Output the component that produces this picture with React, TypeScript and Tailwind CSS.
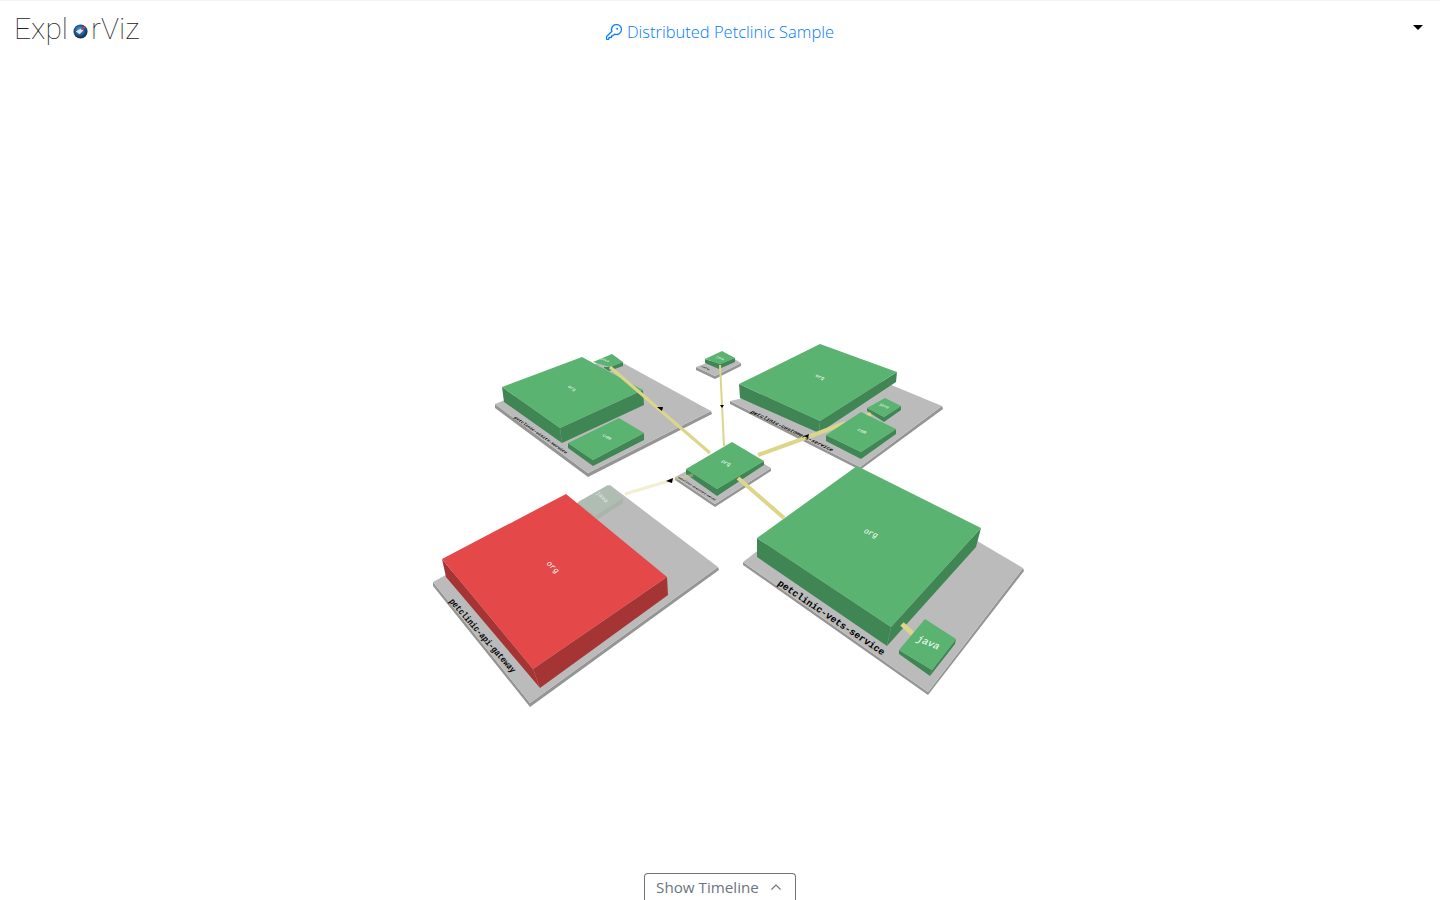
import React from 'react';
import { GoKey, GoChevronUp } from 'react-icons/go';

const GREEN = '#5ab370';
const GREEN_SIDE = '#408655';
const RED = '#e54848';
const RED_SIDE = '#a53535';
const GRAY = '#bbbbbb';
const GRAY_SIDE = '#959595';
const LINE = '#dcd68a';

type Pt = [number, number];

// flat slab drawn as one top face plus the two visible side faces
const Slab = ({ t, l, r, top, side, opacity }: { t: string; l: string; r: string; top: string; side: string; opacity?: number }) => (
  <g opacity={opacity}>
    <polygon points={l} fill={side} />
    <polygon points={r} fill={side} />
    <polygon points={t} fill={top} />
  </g>
);

const Label = ({ at, dir, up, size, text, color = '#ffffff', bold = false, opacity }: { at: Pt; dir: Pt; up: Pt; size: number; text: string; color?: string; bold?: boolean; opacity?: number }) => (
  <text
    transform={`matrix(${dir[0]} ${dir[1]} ${-up[0]} ${-up[1]} ${at[0]} ${at[1]})`}
    textAnchor="middle"
    dominantBaseline="central"
    fontSize={size}
    fontWeight={bold ? 700 : 400}
    fill={color}
    opacity={opacity}
    className="font-['Liberation_Mono',monospace]"
  >
    {text}
  </text>
);

const Pipe = ({ d, w = 4, color = LINE, opacity }: { d: string; w?: number; color?: string; opacity?: number }) => (
  <polyline points={d} fill="none" stroke={color} strokeWidth={w} opacity={opacity} />
);

const Landscape = () => (
  <svg width={1440} height={813} viewBox="0 60 1440 813" className="block">
    {/* foundations */}
    <Slab t="433,582 610,485 718,567 530,703" l="433,582 530,703 530,707 433,586" r="530,703 718,567 719,570 530,707" top={GRAY} side={GRAY_SIDE} />
    <Slab t="743,562 860,472 1023,568 928,692" l="743,562 928,692 928,695 743,565" r="928,692 1023,568 1024,571 928,695" top={GRAY} side={GRAY_SIDE} />
    <Slab t="495,404 612,357 711,411 588,473" l="495,404 588,473 588,477 495,408" r="588,473 711,411 712,414 588,477" top={GRAY} side={GRAY_SIDE} />
    <Slab t="730,401 860,372 942,406 860,467" l="730,401 860,467 860,470 730,404" r="860,467 942,406 943,409 860,470" top={GRAY} side={GRAY_SIDE} />
    <Slab t="696,367 728,355 741,363 715,376" l="696,367 715,376 715,379 696,370" r="715,376 741,363 741,366 715,379" top={GRAY} side={GRAY_SIDE} />
    <Slab t="675,477 735,446 771,468 715,504" l="675,477 715,504 715,507 675,480" r="715,504 771,468 771,471 715,507" top={GRAY} side={GRAY_SIDE} />

    {/* faded package behind the red one */}
    <Slab t="578,502 608,485 623,498 595,516" l="578,502 595,516 595,521 578,507" r="595,516 623,498 623,503 595,521" top="#b0bdb3" side="#a9b5ab" />

    {/* visits service */}
    <Slab t="619,418 644,433 593,460 568,443" l="568,443 593,460 593,466 568,448" r="593,460 644,433 644,440 593,466" top={GREEN} side={GREEN_SIDE} />
    <Slab t="593,362 612,354 623,362 610,367" l="604,367 610,367 609,371 604,368" r="610,367 623,362 623,366 609,371" top={GREEN} side={GREEN_SIDE} />
    <Slab t="582,357 643,390 560,428 502,387" l="502,387 560,428 562,443 504,402" r="560,428 643,390 644,405 562,443" top={GREEN} side={GREEN_SIDE} />

    {/* customers service */}
    <Slab t="885,398 901,406 884,417 867,408" l="867,408 884,417 884,422 867,411" r="884,417 901,406 901,410 884,422" top={GREEN} side={GREEN_SIDE} />
    <Slab t="820,344 897,372 820,421 739,384" l="739,384 820,421 819,433 740,398" r="820,421 897,372 896,382 819,433" top={GREEN} side={GREEN_SIDE} />

    {/* small service up top */}
    <Slab t="722,351 735,358 720,364 705,359" l="705,359 720,364 719,369 705,363" r="720,364 735,358 735,362 719,369" top={GREEN} side={GREEN_SIDE} />

    {/* communication lines */}
    <Pipe d="758,455 808,437 845,423" />
    <Pipe d="866,416 871,414" />
    <Pipe d="720,365 724,446" w={2} />
    <Pipe d="610,367 710,453" w={3} />

    <Slab t="861,412 896,429 861,452 826,435" l="826,435 861,452 861,459 826,441" r="861,452 896,429 896,434 861,459" top={GREEN} side={GREEN_SIDE} />

    {/* center service */}
    <Slab t="732,442 764,461 717,489 686,469" l="686,469 717,489 717,496 686,474" r="717,489 764,461 764,465 717,496" top={GREEN} side={GREEN_SIDE} />
    <Pipe d="738,478 784,518" />
    <Pipe d="625,494 672,480 693,475" w={3} opacity={0.4} />

    {/* vets service */}
    <Slab t="757,538 857,466 981,528 891,627" l="757,538 891,627 887,646 757,557" r="891,627 981,528 976,547 887,646" top={GREEN} side={GREEN_SIDE} />
    <Pipe d="902,624 914,635" w={5} />
    <Slab t="925,619 956,639 932,670 899,650" l="899,650 932,670 930,676 899,654" r="932,670 956,639 955,644 930,676" top={GREEN} side={GREEN_SIDE} />

    {/* api gateway */}
    <Slab t="442,559 566,494 667,577 533,669" l="442,559 533,669 540,688 446,577" r="533,669 667,577 668,595 540,688" top={RED} side={RED_SIDE} />

    {/* arrow heads */}
    <polygon points="657,407 663,407 662,411" fill="#000000" />
    <polygon points="666,481 673,478 672,483" fill="#000000" />
    <polygon points="804,436 809,434 808,438" fill="#000000" />
    <polygon points="720,405 724,405 722,408" fill="#000000" />

    {/* foundation names */}
    <Label at={[482, 636]} dir={[0.66, 0.75]} up={[0.97, -0.7]} size={7.6} text="petclinic-api-gateway" color="#000000" bold />
    <Label at={[831, 618]} dir={[0.83, 0.56]} up={[0.61, -0.79]} size={9.6} text="petclinic-vets-service" color="#000000" bold />
    <Label at={[792, 431]} dir={[0.9, 0.43]} up={[0.8, -0.6]} size={5.6} text="petclinic-customers-service" color="#000000" bold />
    <Label at={[541, 435]} dir={[0.82, 0.57]} up={[0.89, -0.45]} size={4.4} text="petclinic-visits-service" color="#000000" bold />
    <Label at={[697, 489]} dir={[0.85, 0.53]} up={[0.8, -0.6]} size={2.8} text="petclinic-discovery-server" color="#000000" bold />
    <Label at={[705, 368]} dir={[0.92, 0.38]} up={[0.8, -0.6]} size={2.4} text="config" color="#000000" bold />

    {/* package names */}
    <Label at={[871, 533]} dir={[0.9, 0.4]} up={[0.6, -0.8]} size={8} text="org" />
    <Label at={[928, 643]} dir={[0.92, 0.38]} up={[0.6, -0.8]} size={10} text="java" />
    <Label at={[553, 567]} dir={[0.7, 0.7]} up={[0.8, -0.6]} size={8} text="org" />
    <Label at={[602, 497]} dir={[0.7, 0.7]} up={[0.8, -0.6]} size={6} text="java" opacity={0.7} />
    <Label at={[726, 463]} dir={[0.9, 0.4]} up={[0.6, -0.8]} size={5.5} text="org" />
    <Label at={[820, 377]} dir={[0.92, 0.38]} up={[0.6, -0.8]} size={5} text="org" />
    <Label at={[862, 431]} dir={[0.92, 0.38]} up={[0.6, -0.8]} size={5} text="com" />
    <Label at={[884, 406]} dir={[0.92, 0.38]} up={[0.6, -0.8]} size={4.2} text="java" />
    <Label at={[572, 388]} dir={[0.85, 0.5]} up={[0.7, -0.7]} size={4.6} text="org" />
    <Label at={[607, 437]} dir={[0.85, 0.5]} up={[0.7, -0.7]} size={5} text="com" />
    <Label at={[605, 360]} dir={[0.9, 0.42]} up={[0.7, -0.7]} size={3.5} text="java" />
    <Label at={[720, 358]} dir={[0.92, 0.38]} up={[0.6, -0.8]} size={3.5} text="java" />
  </svg>
);

const Globe = () => (
  <svg width={15} height={15} viewBox="0 0 16 16" className="shrink-0">
    <defs>
      <radialGradient id="globe" cx="45%" cy="40%" r="60%">
        <stop offset="0%" stopColor="#6aa6dc" />
        <stop offset="55%" stopColor="#1f5c9c" />
        <stop offset="100%" stopColor="#16243a" />
      </radialGradient>
    </defs>
    <circle cx="8" cy="8" r="7.5" fill="url(#globe)" />
    <path d="M3 8 L8 5 L11 7 L7 11 Z" fill="#dce8f2" />
    <path d="M9 6 L13 3" stroke="#d9403c" strokeWidth="1.5" />
  </svg>
);

export default function App() {
  return (
    <div className="flex h-screen w-full flex-col overflow-hidden border-t border-gray-100 bg-white">
      <header className="grid h-[59px] grid-cols-3 items-start">
        <div className="flex items-center pl-[14px] pt-[8px] font-['Roboto',sans-serif] text-[30px] font-thin leading-[40px] text-[#222222]">
          <span>Expl</span>
          <span className="ml-[5px] mr-[3px] mt-[4px]">
            <Globe />
          </span>
          <span>rViz</span>
        </div>
        <div className="flex items-center justify-center gap-[5px] pt-[19px] font-['Open_Sans',sans-serif] text-[16.5px] font-light leading-6 text-[#007bff]">
          <GoKey size={16} className="stroke-[0.5]" />
          <span>Distributed Petclinic Sample</span>
        </div>
        <div className="flex justify-end pr-[17px] pt-[24px]">
          <div className="h-0 w-0 border-x-[5px] border-t-[5px] border-x-transparent border-t-black" />
        </div>
      </header>

      <main className="flex-1">
        <Landscape />
      </main>

      <div className="flex justify-center">
        <button className="flex h-[27px] w-[152px] items-center justify-center gap-[9px] rounded-t border border-b-0 border-[#6c757d] font-['Open_Sans',sans-serif] text-[15.2px] text-[#6c757d]">
          <span>Show Timeline</span>
          <GoChevronUp size={16} className="stroke-[0.4]" />
        </button>
      </div>
    </div>
  );
}
